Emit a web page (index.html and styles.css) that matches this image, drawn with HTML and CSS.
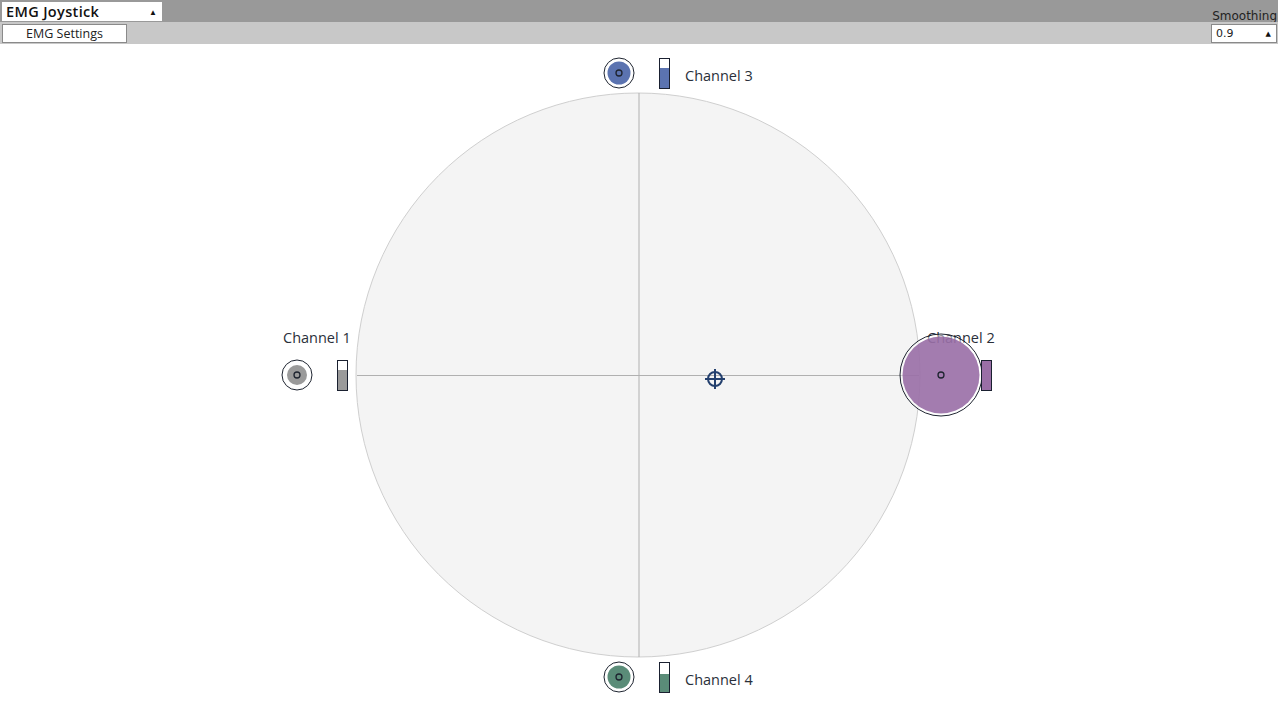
FILE: index.html
```html
<!DOCTYPE html>
<html>
<head>
<meta charset="utf-8">
<link rel="stylesheet" href="styles.css">
</head>
<body>
<div class="header">
  <div class="row row-top">
    <div class="select">
      <span class="select-text">EMG Joystick</span>
      <span class="caret">&#9650;</span>
    </div>
    <div class="smooth-label">Smoothing</div>
  </div>
  <div class="row row-sub">
    <div class="button">EMG Settings</div>
    <div class="spin">
      <span>0.9</span>
      <span class="caret small">&#9650;</span>
    </div>
  </div>
</div>
<svg class="canvas" width="1278" height="660" viewBox="0 44 1278 660" xmlns="http://www.w3.org/2000/svg">
  <circle cx="638" cy="375" r="282" fill="#f4f4f4" stroke="#cfcfcf" stroke-width="1"/>
  <line x1="639" y1="93" x2="639" y2="657" stroke="#b0b0b0" stroke-width="1"/>
  <line x1="357" y1="375.5" x2="919" y2="375.5" stroke="#b0b0b0" stroke-width="1"/>

  <!-- crosshair -->
  <g stroke="#24406e" stroke-width="2" fill="none">
    <circle cx="715" cy="379" r="7"/>
    <line x1="705" y1="379" x2="725" y2="379"/>
    <line x1="715" y1="369" x2="715" y2="389"/>
  </g>

  <g class="label">
    <text x="685" y="81">Channel 3</text>
    <text x="283" y="343">Channel 1</text>
    <text x="927" y="343">Channel 2</text>
    <text x="685" y="685">Channel 4</text>
  </g>

  <!-- Channel 3 -->
  <circle cx="619" cy="73" r="15" fill="#fff" stroke="#1e2430" stroke-width="1"/>
  <circle cx="619" cy="73" r="11.5" fill="#5b73b0"/>
  <circle cx="619" cy="73" r="3" fill="none" stroke="#1e2430" stroke-width="1.3"/>
  <rect x="659.5" y="58.5" width="10" height="30" fill="#fff" stroke="#1a2030"/>
  <rect x="660" y="68" width="9" height="20" fill="#5b73b0"/>

  <!-- Channel 1 -->
  <circle cx="297" cy="375" r="15" fill="#fff" stroke="#1e2430" stroke-width="1"/>
  <circle cx="297" cy="375" r="10" fill="#9a9a9a"/>
  <circle cx="297" cy="375" r="3" fill="none" stroke="#1e2430" stroke-width="1.3"/>
  <rect x="337.5" y="360.5" width="10" height="30" fill="#fff" stroke="#1a2030"/>
  <rect x="338" y="370" width="9" height="20" fill="#9a9a9a"/>

  <!-- Channel 4 -->
  <circle cx="619" cy="677" r="15" fill="#fff" stroke="#1e2430" stroke-width="1"/>
  <circle cx="619" cy="677" r="11.5" fill="#5a8c78"/>
  <circle cx="619" cy="677" r="3" fill="none" stroke="#1e2430" stroke-width="1.3"/>
  <rect x="659.5" y="662.5" width="10" height="30" fill="#fff" stroke="#1a2030"/>
  <rect x="660" y="674" width="9" height="18" fill="#5a8c78"/>

  <!-- Channel 2 -->
  <circle cx="941" cy="375" r="41" fill="none" stroke="#1e2430" stroke-width="1"/>
  <circle cx="941" cy="375" r="40" fill="#fff" fill-opacity="0.5"/>
  <circle cx="941" cy="375" r="38.5" fill="#8f5f9e" fill-opacity="0.82"/>
  <circle cx="941" cy="375" r="3" fill="none" stroke="#1e2430" stroke-width="1.3"/>
  <rect x="981.5" y="360.5" width="10" height="30" fill="#9a6fa6" stroke="#1a2030"/>
</svg>
</body>
</html>
```
FILE: styles.css
```css
html, body {
  margin: 0;
  padding: 0;
  background: #ffffff;
  font-family: "Open Sans", "Noto Sans", sans-serif;
  color: #1e2430;
  width: 1278px;
  height: 704px;
  overflow: hidden;
}

.header {
  display: flex;
  flex-direction: column;
}

.row {
  height: 22px;
  display: flex;
  justify-content: space-between;
  box-sizing: border-box;
}

.row-top {
  background: #999999;
  padding: 2px 1px 0 2px;
}

.row-sub {
  background: #c8c8c8;
  padding: 2px 1px 1px 2px;
}

.select {
  width: 160px;
  height: 19px;
  background: #ffffff;
  box-sizing: border-box;
  display: flex;
  align-items: center;
  justify-content: space-between;
  padding: 0 5px 0 4px;
}

.select-text {
  font-weight: 600;
  font-size: 14.5px;
  color: #111;
  letter-spacing: 0.35px;
}

.caret {
  font-size: 8px;
  color: #111;
}

.caret.small {
  font-size: 7px;
}

.smooth-label {
  font-family: "DejaVu Sans", "Open Sans", sans-serif;
  font-size: 12px;
  color: #222;
  align-self: flex-end;
  line-height: 16px;
  margin-bottom: -2px;
}

.button {
  width: 125px;
  height: 19px;
  box-sizing: border-box;
  background: #ffffff;
  border: 1px solid #8a8a8a;
  font-size: 12.5px;
  color: #222;
  display: flex;
  align-items: center;
  justify-content: center;
}

.spin {
  width: 66px;
  height: 19px;
  box-sizing: border-box;
  background: #ffffff;
  border: 1px solid #8a8a8a;
  font-family: "DejaVu Sans", "Open Sans", sans-serif;
  font-size: 11px;
  color: #222;
  display: flex;
  align-items: center;
  justify-content: space-between;
  padding: 0 5px 0 4px;
}

.canvas {
  display: block;
}

.label text {
  font-family: "Open Sans", "Noto Sans", sans-serif;
  font-size: 14.5px;
  fill: #2a2f3a;
}
```
